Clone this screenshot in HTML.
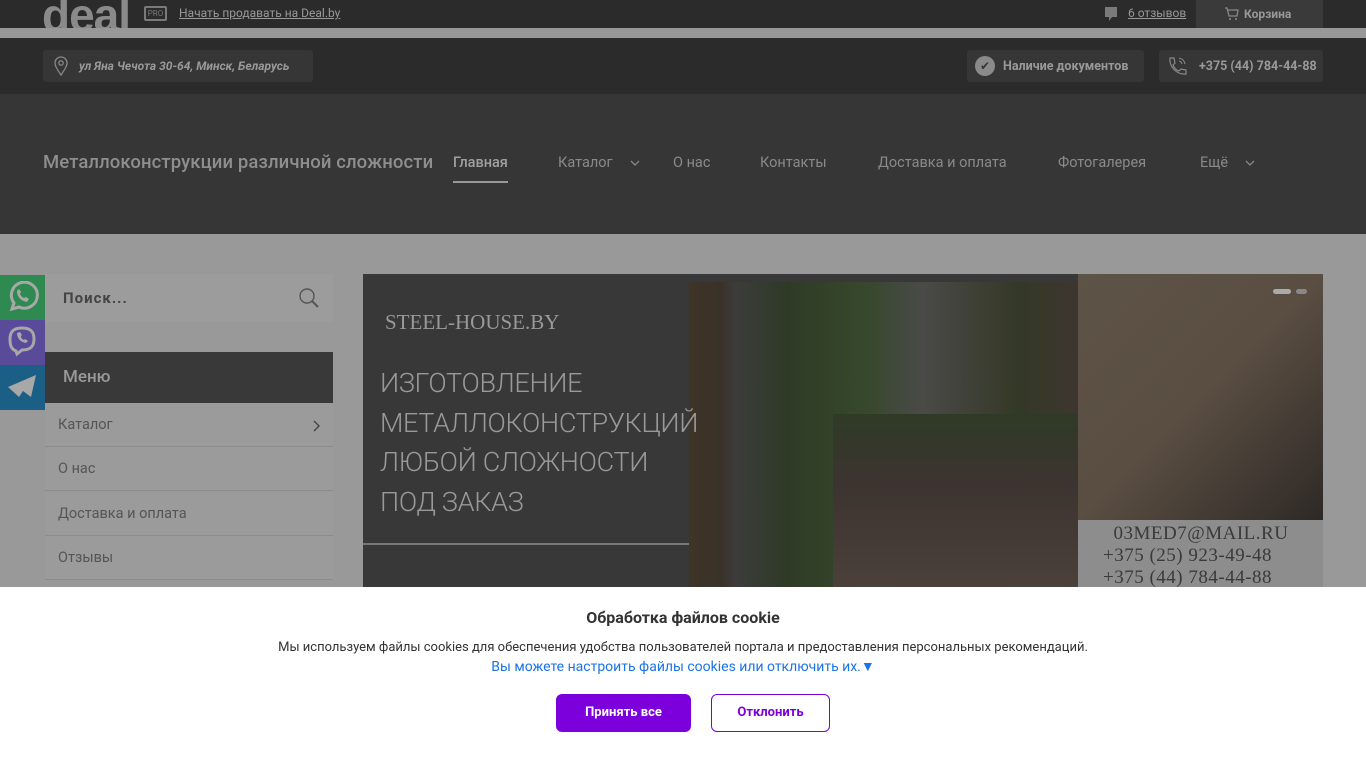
<!DOCTYPE html>
<html><head><meta charset="utf-8"><style>
*{margin:0;padding:0;box-sizing:border-box}
body{width:1366px;height:768px;overflow:hidden;background:#999;font-family:"Roboto","Liberation Sans",sans-serif;position:relative}
.abs{position:absolute}
.top{left:0;top:0;width:1366px;height:28px;background:#2b2b2b}
.stripe{left:0;top:28px;width:1366px;height:10px;background:#989898}
.hdr{left:0;top:38px;width:1366px;height:56px;background:#2b2b2b}
.nav{left:0;top:94px;width:1366px;height:140px;background:#363636}
.pill{background:#363636;border-radius:3px;height:32px;top:50px;color:#999;font-size:12px;font-weight:bold;display:flex;align-items:center}
.navi{top:154px;color:#8a8a8a;font-size:14.5px}
.side{left:45px;width:288px;background:#9c9c9c}
.mi{left:45px;width:288px;height:44px;border-bottom:1px solid #8c8c8c;color:#555;font-size:14.5px;padding:13px 13px;background:#9b9b9b}
.cookie{left:0;top:587px;width:1366px;height:181px;background:#fff;text-align:center;color:#333}
</style></head><body>
<div class="abs top"></div>
<div class="abs" style="left:42px;top:-12px;font-size:46px;font-weight:bold;color:#8a8a8a;letter-spacing:-1px;font-family:'Liberation Sans',sans-serif">deal</div>
<div class="abs" style="left:144px;top:6px;width:23px;height:15px;border:2px solid #7a7a7a;border-radius:2px;font-size:8px;color:#7a7a7a;text-align:center;line-height:11px">PRO</div>
<div class="abs" style="left:179px;top:6px;font-size:12px;color:#999;text-decoration:underline">Начать продавать на Deal.by</div>
<svg class="abs" style="left:1104px;top:6px" width="14" height="17" viewBox="0 0 14 17"><path d="M1 1h12v10H8l-3 4v-4H1z" fill="#7a7a7a"/></svg>
<div class="abs" style="left:1128px;top:6px;font-size:12px;color:#999;text-decoration:underline">6 отзывов</div>
<div class="abs" style="left:1196px;top:0;width:127px;height:28px;background:#3a3a3a;color:#999;font-size:12px;font-weight:bold;padding:7px 0 0 48px">Корзина</div>
<svg class="abs" style="left:1224px;top:6px" width="16" height="16" viewBox="0 0 16 16"><path d="M1 2h2l2 8h8l1-6H4" fill="none" stroke="#888" stroke-width="1.3"/><circle cx="6" cy="13" r="1" fill="#888"/><circle cx="12" cy="13" r="1" fill="#888"/></svg>
<div class="abs stripe"></div>
<div class="abs hdr"></div>
<div class="abs pill" style="left:43px;width:270px;padding-left:36px;font-style:italic">ул Яна Чечота 30-64, Минск, Беларусь</div>
<svg class="abs" style="left:52px;top:56px" width="18" height="20" viewBox="0 0 18 20"><path d="M9 19C5 13 3 10 3 7a6 6 0 0 1 12 0c0 3-2 6-6 12z" fill="none" stroke="#888" stroke-width="1.3"/><circle cx="9" cy="7" r="2.2" fill="none" stroke="#888" stroke-width="1.3"/></svg>
<div class="abs pill" style="left:967px;width:177px;padding-left:36px;font-size:12.5px">Наличие документов</div>
<div class="abs" style="left:975px;top:56px;width:20px;height:20px;border-radius:50%;background:#8a8a8a;color:#363636;font-size:12px;text-align:center;line-height:20px">✔</div>
<div class="abs pill" style="left:1159px;width:164px;padding-left:40px;font-size:12.5px">+375 (44) 784-44-88</div>
<svg class="abs" style="left:1166px;top:55px" width="22" height="22" viewBox="0 0 22 22"><path d="M4 3l4 0 1 5-2 2c1 3 3 5 6 6l2-2 5 1 0 4c-9 1-17-7-16-16z" fill="none" stroke="#888" stroke-width="1.2"/><path d="M13 3a7 7 0 0 1 6 6M13 6a4 4 0 0 1 3 3" fill="none" stroke="#888" stroke-width="1"/></svg>
<div class="abs nav"></div>
<div class="abs" style="left:43px;top:151px;font-size:18.5px;color:#8e8e8e;font-weight:500;letter-spacing:0.1px">Металлоконструкции различной сложности</div>
<div class="abs navi" style="left:453px;color:#a0a0a0;font-weight:500">Главная</div>
<div class="abs" style="left:453px;top:181px;width:55px;height:2px;background:#999"></div>
<div class="abs navi" style="left:558px">Каталог</div>
<svg class="abs" style="left:630px;top:160px" width="10" height="7" viewBox="0 0 10 7"><path d="M1 1l4 4 4-4" fill="none" stroke="#888" stroke-width="1.3"/></svg>
<div class="abs navi" style="left:673px">О нас</div>
<div class="abs navi" style="left:760px">Контакты</div>
<div class="abs navi" style="left:878px">Доставка и оплата</div>
<div class="abs navi" style="left:1058px">Фотогалерея</div>
<div class="abs navi" style="left:1200px">Ещё</div>
<svg class="abs" style="left:1245px;top:160px" width="10" height="7" viewBox="0 0 10 7"><path d="M1 1l4 4 4-4" fill="none" stroke="#888" stroke-width="1.3"/></svg>
<div class="abs" style="left:0;top:275px;width:45px;height:45px;background:#2f8a52"></div>
<div class="abs" style="left:0;top:320px;width:45px;height:45px;background:#5a4a9a"></div>
<div class="abs" style="left:0;top:365px;width:45px;height:45px;background:#1b5f86"></div>
<svg class="abs" style="left:6px;top:281px" width="33" height="120" viewBox="0 0 33 120"><path d="M6 28l2-6a13 13 0 1 1 5 4z" fill="none" stroke="#a8a8a8" stroke-width="3"/><path d="M11 10c0 6 4 10 10 11l2-3-3-2-2 1c-2-1-3-2-4-4l1-2-2-3z" fill="#a8a8a8"/><path d="M10 70c-5-2-6-6-6-12 0-8 4-11 12-11s12 3 12 11c0 8-4 11-12 11l-5 4z" fill="none" stroke="#a8a8a8" stroke-width="3"/><path d="M11 52c0 5 3 9 9 10l2-2-3-2-1 1c-2-1-3-2-3-4l1-1-2-3z" fill="#a8a8a8"/><path d="M2 106l28-12-5 22-8-6-4 6z" fill="#a8a8a8"/></svg>
<div class="abs side" style="top:274px;height:48px;color:#444;font-size:15px;font-weight:bold;padding:15px 18px;letter-spacing:1px">Поиск...</div>
<svg class="abs" style="left:298px;top:287px" width="22" height="22" viewBox="0 0 22 22"><circle cx="9" cy="9" r="7" fill="none" stroke="#555" stroke-width="1.4"/><path d="M14 14l6 6" stroke="#555" stroke-width="2"/></svg>
<div class="abs" style="left:45px;top:352px;width:288px;height:51px;background:#393939;color:#999;font-size:17px;font-weight:500;padding:15px 18px">Меню</div>
<div class="abs mi" style="top:403px">Каталог<svg style="float:right;margin-top:4px" width="8" height="12" viewBox="0 0 8 12"><path d="M2 1l5 5-5 5" fill="none" stroke="#444" stroke-width="1.4"/></svg></div>
<div class="abs mi" style="top:447px">О нас</div>
<div class="abs mi" style="top:492px">Доставка и оплата</div>
<div class="abs mi" style="top:536px">Отзывы</div>
<div class="abs" style="left:363px;top:274px;width:960px;height:313px;background:#383838;overflow:hidden">
<div class="abs" style="left:326px;top:8px;width:389px;height:305px;background:linear-gradient(90deg,#3e3428 0,#3a3128 8%,#3c3c3c 12%,#2f3a26 25%,#36482c 45%,#4a4a48 60%,#343826 85%,#3d3630 100%)"></div>
<div class="abs" style="left:470px;top:140px;width:245px;height:173px;background:linear-gradient(180deg,#2f3a26,#3c3430 40%,#4b403a)"></div>
<div class="abs" style="left:22px;top:36px;color:#999;font-size:21px;font-family:'Liberation Serif',serif">STEEL-HOUSE.BY</div>
<div class="abs" style="left:17px;top:90px;color:#999;font-size:27px;line-height:39.5px;font-weight:300;letter-spacing:-0.3px">ИЗГОТОВЛЕНИЕ<br>МЕТАЛЛОКОНСТРУКЦИЙ<br>ЛЮБОЙ СЛОЖНОСТИ<br>ПОД ЗАКАЗ</div>
<div class="abs" style="left:0;top:269px;width:326px;height:2px;background:#777"></div>
<div class="abs" style="left:715px;top:0;width:245px;height:246px;background:linear-gradient(135deg,#5d5346,#5a4e42 50%,#2e2926)"></div>
<div class="abs" style="left:715px;top:246px;width:245px;height:67px;background:#8d8d8d;color:#3a3a3a;font-size:19px;line-height:22px;font-family:'Liberation Serif',serif;padding:3px 0 0 25px;letter-spacing:0.5px">&nbsp;&nbsp;03MED7@MAIL.RU<br>+375 (25) 923-49-48<br>+375 (44) 784-44-88</div>
<div class="abs" style="left:910px;top:15px;width:18px;height:5px;border-radius:3px;background:#aaa"></div>
<div class="abs" style="left:933px;top:15px;width:11px;height:5px;border-radius:3px;background:#888"></div>
</div>
<div class="abs cookie">
<div style="margin-top:21px;font-size:16px;font-weight:bold">Обработка файлов cookie</div>
<div style="margin-top:13px;font-size:13px">Мы используем файлы cookies для обеспечения удобства пользователей портала и предоставления персональных рекомендаций.</div>
<div style="margin-top:3px;font-size:14px;color:#1a73e8">Вы можете настроить файлы cookies или отключить их.▼</div>
</div>
<div class="abs" style="left:556px;top:694px;width:135px;height:38px;background:#7b00dc;border-radius:6px;color:#fff;font-size:13px;font-weight:bold;text-align:center;line-height:38px">Принять все</div>
<div class="abs" style="left:711px;top:694px;width:119px;height:38px;border:1px solid #7b00dc;border-radius:6px;color:#7b00dc;font-size:13px;font-weight:bold;text-align:center;line-height:36px">Отклонить</div>
</body></html>
